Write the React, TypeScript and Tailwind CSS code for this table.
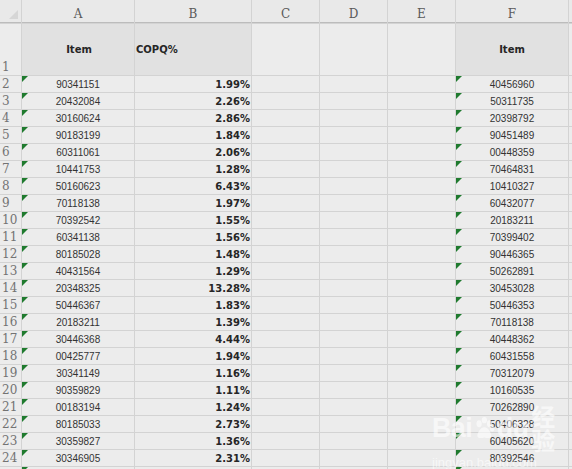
import React from 'react';

const colA = ['90341151', '20432084', '30160624', '90183199', '60311061', '10441753', '50160623', '70118138', '70392542', '60341138', '80185028', '40431564', '20348325', '50446367', '20183211', '30446368', '00425777', '30341149', '90359829', '00183194', '80185033', '30359827', '30346905'];
const colB = ['1.99%', '2.26%', '2.86%', '1.84%', '2.06%', '1.28%', '6.43%', '1.97%', '1.55%', '1.56%', '1.48%', '1.29%', '13.28%', '1.83%', '1.39%', '4.44%', '1.94%', '1.16%', '1.11%', '1.24%', '2.73%', '1.36%', '2.31%'];
const colF = ['40456960', '50311735', '20398792', '90451489', '00448359', '70464831', '10410327', '60432077', '20183211', '70399402', '90446365', '50262891', '30453028', '50446353', '70118138', '40448362', '60431558', '70312079', '10160535', '70262890', '50406328', '60405620', '80392546'];

const letters = ['A', 'B', 'C', 'D', 'E', 'F', ''];

function Flag() {
  return (
    <svg className="absolute left-0 top-0" width="6" height="6" viewBox="0 0 6 6">
      <polygon points="0,0 6,0 0,6" fill="#1f7a2e" />
    </svg>
  );
}

function RowNum({ n, tall }: { n?: number; tall?: boolean }) {
  return (
    <div className={`bg-[#ececec] pl-[2px] font-['DejaVu_Serif'] text-[12px] leading-none text-[#737373] flex ${tall ? 'items-end pb-[2px]' : 'items-center'}`}>
      {n}
    </div>
  );
}

export default function App() {
  // 23 data rows plus a partly visible row 25 at the bottom edge
  const rows = Array.from({ length: 24 }, (_, i) => i);
  return (
    <div className="relative w-[572px] h-[469px] overflow-hidden bg-[#ececec]">
      <div className="grid gap-px bg-[#d3d3d3] grid-cols-[21px_112px_116px_67px_67px_67px_112px_1fr] grid-rows-[23px_51px_repeat(24,16px)]">
        {/* column headers */}
        <div className="relative bg-[#e9e9e9] border-b border-[#bcbcbc]">
          <svg className="absolute right-[3px] bottom-[3px]" width="9" height="9" viewBox="0 0 9 9">
            <polygon points="9,0 9,9 0,9" fill="#d6d6d6" />
          </svg>
        </div>
        {letters.map((l, i) => (
          <div key={i} className="bg-[#e9e9e9] border-b border-[#bcbcbc] flex justify-center items-end pb-[2px] font-['DejaVu_Serif'] text-[12px] leading-none text-[#5a5a5a]">
            {l}
          </div>
        ))}

        {/* row 1 */}
        <RowNum n={1} tall />
        <div className="bg-[#e1e1e1] flex items-center justify-center pl-[2px] font-['DejaVu_Sans'] font-bold text-[10px] text-[#262626]">Item</div>
        <div className="bg-[#e1e1e1] flex items-center pl-px font-['DejaVu_Sans'] font-bold text-[10px] text-[#262626]">COPQ%</div>
        <div className="bg-[#ececec]" />
        <div className="bg-[#ececec]" />
        <div className="bg-[#ececec]" />
        <div className="bg-[#e1e1e1] flex items-center justify-center font-['DejaVu_Sans'] font-bold text-[10px] text-[#262626]">Item</div>
        <div className="bg-[#ececec]" />

        {rows.map((i) => (
          <React.Fragment key={i}>
            <RowNum n={i < 23 ? i + 2 : undefined} />
            <div className="relative bg-[#ececec] flex items-center justify-center font-['Liberation_Sans'] text-[10px] text-[#333]">
              <Flag />
              {colA[i]}
            </div>
            <div className="bg-[#ececec] flex items-center justify-end pr-px font-['DejaVu_Sans'] font-bold text-[10px] text-[#262626]">
              {colB[i]}
            </div>
            <div className="bg-[#ececec]" />
            <div className="bg-[#ececec]" />
            <div className="bg-[#ececec]" />
            <div className="relative bg-[#ececec] flex items-center justify-center font-['Liberation_Sans'] text-[10px] text-[#333]">
              <Flag />
              {colF[i]}
            </div>
            <div className="bg-[#ececec]" />
          </React.Fragment>
        ))}
      </div>

      {/* watermark */}
      <div className="absolute left-[432px] top-[404px] flex flex-col items-start text-white/60 pointer-events-none">
        <div className="flex items-center font-['Liberation_Sans'] font-bold text-[27px] leading-none tracking-tight">
          <span>Bai</span>
          <svg width="26" height="26" viewBox="0 0 26 26" className="mx-[1px]">
            <g fill="rgba(255,255,255,0.6)">
              <ellipse cx="7" cy="8" rx="3" ry="4" />
              <ellipse cx="13" cy="4" rx="3" ry="3.6" />
              <ellipse cx="19" cy="8" rx="3" ry="4" />
              <ellipse cx="22" cy="14" rx="2.6" ry="3.2" />
              <path d="M13 12c-4 0-8 6-8 10 0 3 4 3 8 2 4 1 8 1 8-2 0-4-4-10-8-10z" />
            </g>
          </svg>
          <span>du</span>
          <span className="ml-[3px] font-['Noto_Sans_CJK_SC'] font-bold text-[24px]">经验</span>
        </div>
        <div className="mt-[4px] font-['Liberation_Sans'] text-[13px] leading-none">jingyan.baidu.com</div>
      </div>
    </div>
  );
}
